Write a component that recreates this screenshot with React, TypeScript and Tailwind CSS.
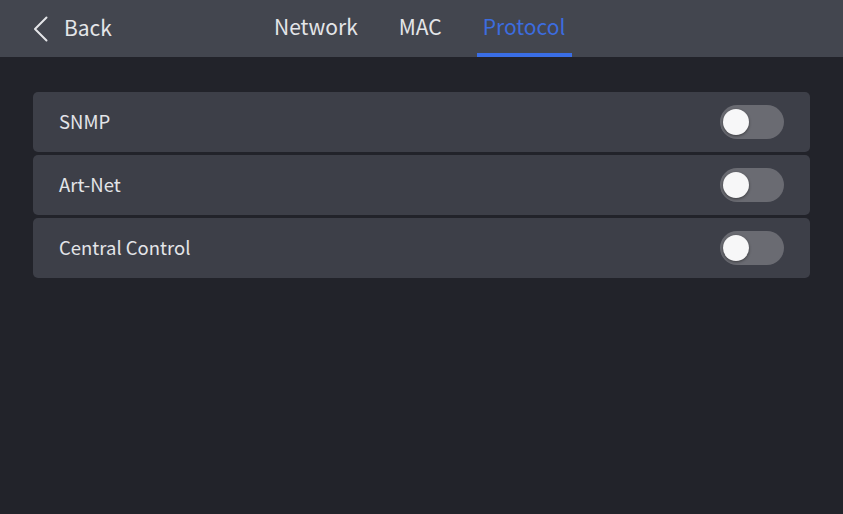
import { useState } from "react";

const tabs = ["Network", "MAC", "Protocol"];
const protocols = ["SNMP", "Art-Net", "Central Control"];

function Toggle({ on, onChange }: { on: boolean; onChange: () => void }) {
  return (
    <button
      onClick={onChange}
      className={`flex h-[34px] w-[64px] items-center rounded-full px-[3px] ${on ? "bg-[#3a6ee6]" : "bg-[#6a6b72]"}`}
    >
      <span
        className={`h-[26px] w-[26px] rounded-full bg-[#f7f7f8] shadow-[0_1px_3px_rgba(0,0,0,0.45)] transition-transform ${on ? "translate-x-[32px]" : ""}`}
      />
    </button>
  );
}

export default function App() {
  const [active, setActive] = useState(2);
  const [state, setState] = useState<boolean[]>([false, false, false]);

  return (
    <div
      className="flex h-[514px] w-[843px] flex-col bg-[#22232a] text-[#e4e5e8]"
      style={{ fontFamily: '"Noto Sans CJK SC", "Noto Sans", sans-serif' }}
    >
      <header className="flex h-[57px] shrink-0 items-stretch bg-[#43464f]">
        <div className="flex w-[268px] items-center pl-[33px]">
          <button className="flex items-center gap-[16px] text-[21px] leading-none">
            <svg width="15" height="26" viewBox="0 0 15 26" fill="none">
              <path d="M13.5 1.5 2 13l11.5 11.5" stroke="#e4e5e8" strokeWidth="2" strokeLinecap="round" strokeLinejoin="round" />
            </svg>
            <span className="-mt-[2px]">Back</span>
          </button>
        </div>
        <nav className="flex items-stretch gap-[29px]">
          {tabs.map((t, i) => (
            <button
              key={t}
              onClick={() => setActive(i)}
              className={`flex items-center border-b-4 px-[6px] text-[21px] leading-none ${
                active === i ? "border-[#3a6ee6] text-[#3c6cdf]" : "border-transparent text-[#e4e5e8]"
              }`}
            >
              {t}
            </button>
          ))}
        </nav>
      </header>

      <main className="flex flex-col gap-[3px] px-[33px] pt-[35px]">
        {protocols.map((p, i) => (
          <div key={p} className="flex h-[60px] items-center justify-between rounded-[5px] bg-[#3d3f48] pl-[26px] pr-[26px]">
            <span className="-mt-[1px] text-[18.5px] leading-none">{p}</span>
            <Toggle on={state[i]} onChange={() => setState((s) => s.map((v, j) => (j === i ? !v : v)))} />
          </div>
        ))}
      </main>
    </div>
  );
}
